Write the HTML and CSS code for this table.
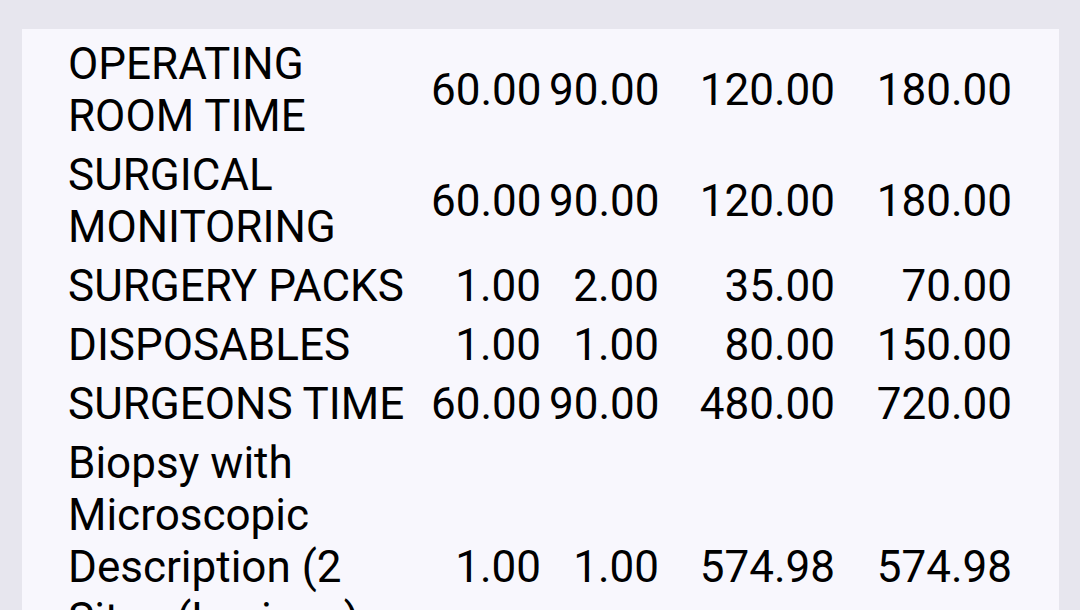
FILE: index.html
```html
<!DOCTYPE html>
<html>
<head>
<meta charset="utf-8">
<link rel="stylesheet" href="styles.css">
</head>
<body>
<div class="card">
  <div class="table">
    <div class="label">OPERATING ROOM TIME</div>
    <div class="num">60.00</div><div class="num">90.00</div><div class="num">120.00</div><div class="num">180.00</div>

    <div class="label">SURGICAL MONITORING</div>
    <div class="num">60.00</div><div class="num">90.00</div><div class="num">120.00</div><div class="num">180.00</div>

    <div class="label">SURGERY PACKS</div>
    <div class="num">1.00</div><div class="num">2.00</div><div class="num">35.00</div><div class="num">70.00</div>

    <div class="label">DISPOSABLES</div>
    <div class="num">1.00</div><div class="num">1.00</div><div class="num">80.00</div><div class="num">150.00</div>

    <div class="label">SURGEONS TIME</div>
    <div class="num">60.00</div><div class="num">90.00</div><div class="num">480.00</div><div class="num">720.00</div>

    <div class="label">Biopsy with Microscopic Description (2 Sites (Lesions) Included</div>
    <div class="num">1.00</div><div class="num">1.00</div><div class="num">574.98</div><div class="num">574.98</div>
  </div>
</div>
</body>
</html>
```
FILE: styles.css
```css
html, body {
  margin: 0;
  padding: 0;
  height: 100%;
  overflow: hidden;
  background: #e7e6ee;
}
.card {
  margin: 29px 21px 0 22px;
  background: #f8f7fd;
  padding: 9px 47px 40px 46px;
  min-height: 700px;
  font-family: Roboto, "Noto Sans", sans-serif;
  font-size: 44px;
  line-height: 52px;
  color: #000;
}
.table {
  display: grid;
  grid-template-columns: 355px 110px 110px 168px 169px;
  column-gap: 8px;
  row-gap: 7px;
}
.label {
  align-self: start;
}
.num {
  align-self: center;
  text-align: right;
}
```
